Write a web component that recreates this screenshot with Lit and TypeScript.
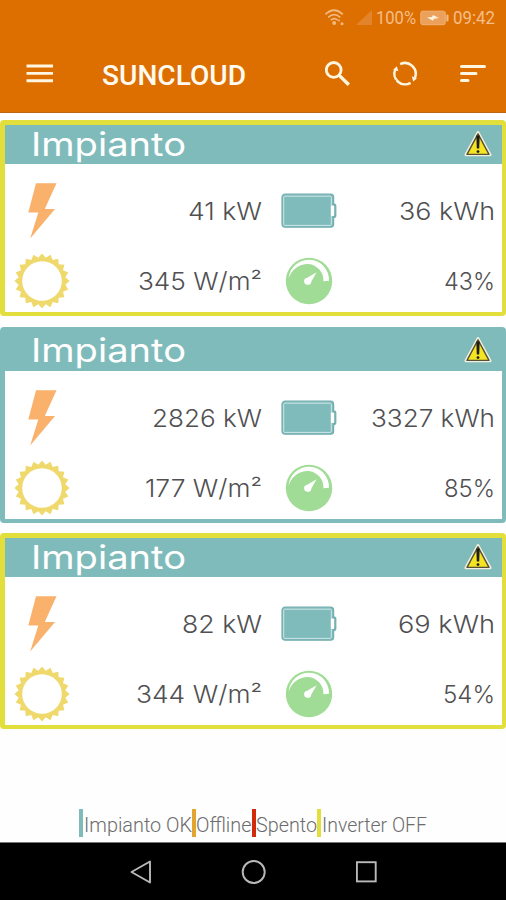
import { LitElement, html, css } from "lit";
import { customElement, property } from "lit/decorators.js";

/** A single line of text fitted to a given advance width. */
@customElement("fit-text")
class FitText extends LitElement {
  @property() text = "";
  @property({ type: Number }) width = 100;
  @property({ type: Number }) height = 40;
  @property({ type: Number }) baseline = 29.4;
  static styles = css`
    :host { display: block; flex: none; }
    svg { display: block; overflow: visible; }
    text { fill: currentColor; white-space: pre; }
  `;
  render() {
    return html`<svg width=${this.width} height=${this.height}>
      <text x="0" y=${this.baseline} textLength=${this.width} lengthAdjust="spacingAndGlyphs">${this.text}</text>
    </svg>`;
  }
}

interface Plant {
  power: [string, number];
  energy: [string, number];
  irradiance: [string, number];
  charge: [string, number];
  inverterOff: boolean;
}

const plants: Plant[] = [
  { power: ["41 kW", 74], energy: ["36 kWh", 96], irradiance: ["345 W/m²", 124], charge: ["43%", 51], inverterOff: true },
  { power: ["2826 kW", 110], energy: ["3327 kWh", 124], irradiance: ["177 W/m²", 117], charge: ["85%", 51], inverterOff: false },
  { power: ["82 kW", 80], energy: ["69 kWh", 97], irradiance: ["344 W/m²", 126], charge: ["54%", 52], inverterOff: true },
];

const sunPoints = Array.from({ length: 40 }, (_, i) => {
  const r = i % 2 ? 23.6 : 27.6;
  const a = (i * Math.PI) / 20 - Math.PI / 2;
  return `${(28 + r * Math.cos(a)).toFixed(2)},${(28 + r * Math.sin(a)).toFixed(2)}`;
}).join(" ");

const bolt = html`<svg width="56" height="58" viewBox="0 0 56 58">
  <path d="M22 1.2H42.5L30.8 27H41L16.2 56.5L24.3 30.5H14.3Z" fill="#f9b16c"/></svg>`;
const sun = html`<svg width="56" height="56" viewBox="0 0 56 56">
  <polygon points=${sunPoints} fill="#efd96c"/><circle cx="28" cy="28" r="19.8" fill="#fff"/></svg>`;
const battery = html`<svg width="56" height="36" viewBox="0 0 56 36">
  <path d="M51 10.3h1.6q2.8 0 2.8 2.8v9.4q0 2.8-2.8 2.8H51z" fill="#76b1b2"/>
  <rect x="1" y="1.2" width="51.6" height="33" rx="3" fill="#80bbbc" stroke="#74aeaf" stroke-width="1.2"/>
  <rect x="2.7" y="3.2" width="47.6" height="29.2" rx="1" fill="none" stroke="#cde6e6" stroke-width="1"/>
  <rect x="49.9" y="12.5" width="3.3" height="10.4" rx="1" fill="#fff"/></svg>`;
const gauge = html`<svg width="48" height="48" viewBox="0 0 48 48">
  <circle cx="24" cy="24" r="23.2" fill="#a0dc95"/>
  <path d="M3.6 22A20.2 20.2 0 0 1 44 23.8L38.4 24.2A16.6 16.6 0 0 0 23.4 6.9A20 20 0 0 0 3.6 22Z" fill="#fff"/>
  <path d="M31.6 15.3L26.3 24.4A3.6 3.6 0 1 1 22.2 20.7Z" fill="#fff"/></svg>`;
const warning = html`<svg width="30" height="28" viewBox="0 0 30 28">
  <path d="M15 1.6L27 23.8H3Z" fill="#f4efdd" stroke="#f4efdd" stroke-width="3" stroke-linejoin="round"/>
  <path d="M15 2.8L26 23.4H4Z" fill="#f4e421" stroke="#55513a" stroke-width="1.4" stroke-linejoin="round"/>
  <path d="M13.3 4.5H16.7L16.2 17.5H13.8Z" fill="#1d1d12"/><circle cx="15" cy="20.6" r="1.4" fill="#1d1d12"/></svg>`;

@customElement("plant-card")
class PlantCard extends LitElement {
  @property({ attribute: false }) plant!: Plant;
  static styles = css`
    :host { display: block; }
    .card { box-sizing: border-box; height: 196px; border: solid #e2df3c; border-width: 5px 4px 4px 5px; border-radius: 4px; background: #fff; }
    .card.ok { border-color: #80bbbc; }
    .head { height: 39px; background: #80bbbc; display: flex; align-items: center; justify-content: space-between; padding: 0 9px 0 26px; color: #fff; font: 400 33px Inter, sans-serif; }
    .grid { display: grid; grid-template-columns: 75px 182px 75px 158px; grid-template-rows: 70px 70px; padding-top: 12px; height: 136px; align-items: center; color: #505052; font: 300 24.6px Inter, sans-serif; }
    .grid svg { display: block; }
    .value { justify-self: end; }
    .lead { padding-left: 9px; }
    .mid { justify-self: center; padding-left: 19px; width: 56px; display: flex; justify-content: center; }
  `;
  private value([text, width]: [string, number]) {
    return html`<fit-text class="value" .text=${text} .width=${width}></fit-text>`;
  }
  render() {
    const p = this.plant;
    return html`<div class="card ${p.inverterOff ? "" : "ok"}">
      <div class="head"><fit-text text="Impianto" .width=${155} .baseline=${30.8}></fit-text>${warning}</div>
      <div class="grid">
        <div class="lead">${bolt}</div>${this.value(p.power)}
        <div class="mid">${battery}</div>${this.value(p.energy)}
        <div class="lead">${sun}</div>${this.value(p.irradiance)}
        <div class="mid">${gauge}</div>${this.value(p.charge)}
      </div>
    </div>`;
  }
}

const legend: [string, string, number][] = [
  ["ok", "Impianto OK", 108],
  ["offline", "Offline", 55.5],
  ["spento", "Spento", 61],
  ["inverter", "Inverter OFF", 105],
];

@customElement("app-root")
class AppRoot extends LitElement {
  static styles = css`
    :host { display: flex; flex-direction: column; box-sizing: border-box; width: 506px; height: 900px; overflow: hidden; background: #fefefe; font-family: Roboto, sans-serif; }
    svg { display: block; flex: none; }
    header { height: 113px; box-sizing: border-box; background: #dd6f00; border-bottom: 1.5px solid #bd6514; }
    .status { height: 36px; display: flex; align-items: center; padding-left: 325px; color: #f5be8a; font-size: 17.5px; }
    .status .net { margin-right: 4px; }
    .status .bat { margin: 0 4px 0 4px; }
    .bar { height: 76px; display: flex; align-items: center; color: #fffaf0; font-size: 27.5px; font-weight: 500; }
    .menu { margin: 0 49px 0 26px; }
    .search { margin-left: 79px; }
    .refresh { margin-left: 40px; }
    .sort { margin-left: 41px; }
    main { flex: 1; display: flex; flex-direction: column; gap: 10.5px; padding-top: 7px; }
    .legend { height: 34px; display: flex; align-items: flex-start; padding-left: 79px; color: #6c6c6c; font-size: 19.5px; font-weight: 300; }
    .mark { flex: none; width: 4px; height: 28px; margin-top: 1px; margin-right: 0.5px; }
    .ok { background: #80bbbc; }
    .offline { background: #e2a52f; }
    .spento { background: #d32a0c; }
    .inverter { background: #e2df3c; }
    nav { box-sizing: border-box; height: 58px; background: #000; border-top: 1px solid #777; display: flex; align-items: center; padding-left: 129px; }
    .home { margin-left: 87px; }
    .recent { margin-left: 89px; }
  `;
  render() {
    return html`
      <header>
        <div class="status">
          <svg class="net" width="47" height="20" viewBox="0 0 47 20">
            <g fill="none" stroke="#f3b983" stroke-width="1.7">
              <path d="M0.5 6.3Q9-1.8 17.8 6.3"/><path d="M3.2 9.3Q9.2 3.8 15.2 9.3"/><path d="M5.8 12.2Q9.2 9.2 12.6 12.2"/>
            </g>
            <circle cx="9.2" cy="15" r="1.9" fill="#f3b983"/><circle cx="17" cy="15.8" r="1.5" fill="#f3b983"/><circle cx="14" cy="12.5" r="1" fill="#f3b983"/>
            <path d="M31 17L47 2V17Z" fill="#e3832a"/>
          </svg>
          <fit-text text="100%" .width=${40} .height=${36} .baseline=${24.2}></fit-text>
          <svg class="bat" width="29" height="16" viewBox="0 0 29 16">
            <rect x="0.8" y="1.2" width="24.5" height="13.5" rx="2" fill="#eba15c" stroke="#f0b277"/>
            <rect x="26.3" y="4.5" width="2.2" height="7" rx="1" fill="#f3b983"/>
            <path d="M7 7.6L12 7L13 5L19 8L14 8.8L13 10.8Z" fill="#fff1df"/>
          </svg>
          <fit-text text="09:42" .width=${42} .height=${36} .baseline=${24.2}></fit-text>
        </div>
        <div class="bar">
          <svg class="menu" width="27" height="20" viewBox="0 0 27 20"><path d="M0.5 2H27M0.5 9.4H27M0.5 16.8H27" stroke="#fff6e2" stroke-width="2.9"/></svg>
          <fit-text text="SUNCLOUD" .width=${144} .baseline=${30.8}></fit-text>
          <svg class="search" width="26" height="26" viewBox="0 0 26 26"><circle cx="8.7" cy="8.9" r="7.4" fill="none" stroke="#fff6e2" stroke-width="2.8"/><path d="M14.2 14.4L23.8 23.8" stroke="#fff6e2" stroke-width="3.4"/></svg>
          <svg class="refresh" width="28" height="28" viewBox="0 0 28 28">
            <g fill="none" stroke="#fff6e2" stroke-width="2.5">
              <path d="M9.2 4.1A10.8 10.8 0 0 1 23.9 17.8"/><path d="M19.6 22.9A10.8 10.8 0 0 1 4.2 9.4"/>
            </g>
            <path d="M20.8 16.2L25.9 18.6L22.2 21.6ZM2.2 9.8L5.8 6.3L7.4 11.2Z" fill="#fff6e2"/>
            <path d="M5.2 19.9L2.4 21.6" stroke="#dd6f00" stroke-width="1"/>
          </svg>
          <svg class="sort" width="26" height="20" viewBox="0 0 26 20"><path d="M1.5 2.4H24.5M1.5 9.6H16M1.5 16.6H8" stroke="#fff6e2" stroke-width="3" stroke-linecap="round"/></svg>
        </div>
      </header>
      <main>${plants.map((p) => html`<plant-card .plant=${p}></plant-card>`)}</main>
      <div class="legend">
        ${legend.map(([kind, label, width]) => html`<span class="mark ${kind}"></span><fit-text .text=${label} .width=${width} .height=${30} .baseline=${23.8}></fit-text>`)}
      </div>
      <nav>
        <svg width="25" height="26" viewBox="0 0 25 26"><path d="M2.5 13L21 2.5V23.5Z" fill="none" stroke="#b9b9b9" stroke-width="1.9" stroke-linejoin="round"/></svg>
        <svg class="home" width="26" height="26" viewBox="0 0 26 26"><circle cx="12.7" cy="13" r="11" fill="none" stroke="#b9b9b9" stroke-width="1.9"/></svg>
        <svg class="recent" width="24" height="26" viewBox="0 0 24 26"><rect x="0.9" y="3.2" width="18.8" height="19.2" fill="none" stroke="#b9b9b9" stroke-width="1.9"/></svg>
      </nav>
    `;
  }
}
